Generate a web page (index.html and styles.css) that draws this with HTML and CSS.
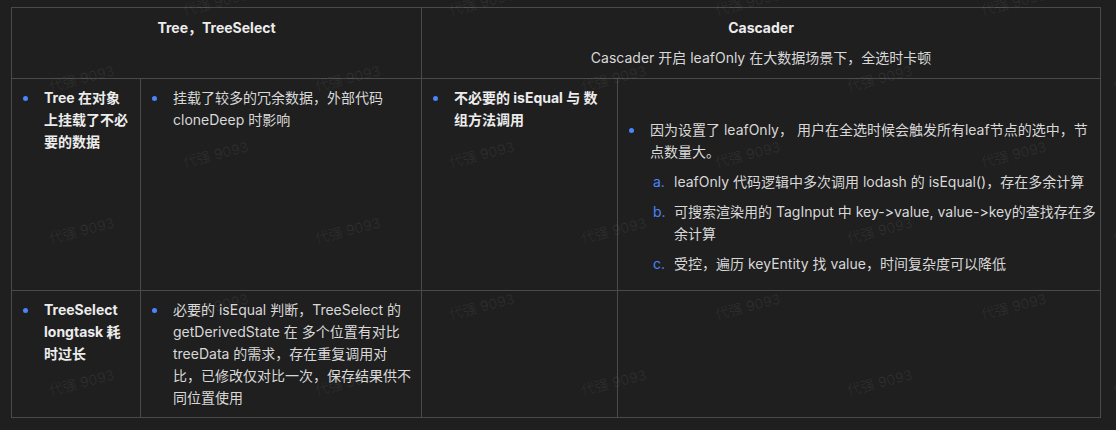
FILE: index.html
```html
<!DOCTYPE html>
<html lang="zh">
<head>
<meta charset="utf-8">
<title>Tree / Cascader 性能</title>
<link rel="stylesheet" href="styles.css">
</head>
<body>
<div class="page">
  <table class="doc-table">
    <colgroup>
      <col class="c1"><col class="c2"><col class="c3"><col class="c4">
    </colgroup>
    <tr class="head-row">
      <td colspan="2" class="head">
        <p class="title">Tree，TreeSelect</p>
      </td>
      <td colspan="2" class="head">
        <p class="title">Cascader</p>
        <p class="sub">Cascader 开启 leafOnly 在大数据场景下，全选时卡顿</p>
      </td>
    </tr>
    <tr>
      <td><ul class="list"><li class="strong">Tree 在对象上挂载了不必要的数据</li></ul></td>
      <td><ul class="list"><li>挂载了较多的冗余数据，外部代码 cloneDeep 时影响</li></ul></td>
      <td><ul class="list"><li class="strong">不必要的 isEqual 与 数组方法调用</li></ul></td>
      <td class="wide">
        <p class="empty"></p>
        <ul class="list spaced">
          <li>因为设置了 leafOnly， 用户在全选时候会触发所有leaf节点的选中，节点数量大。
            <ol class="sublist">
              <li><span class="mk">a.</span>leafOnly 代码逻辑中多次调用 lodash 的 isEqual()，存在多余计算</li>
              <li><span class="mk">b.</span>可搜索渲染用的 TagInput 中 key-&gt;value, value-&gt;key的查找存在多余计算</li>
              <li><span class="mk">c.</span>受控，遍历 keyEntity 找 value，时间复杂度可以降低</li>
            </ol>
          </li>
        </ul>
      </td>
    </tr>
    <tr>
      <td><ul class="list"><li class="strong">TreeSelect longtask 耗时过长</li></ul></td>
      <td><ul class="list"><li>必要的 isEqual 判断，TreeSelect 的 getDerivedState 在 多个位置有对比 treeData 的需求，存在重复调用对比，已修改仅对比一次，保存结果供不同位置使用</li></ul></td>
      <td></td>
      <td class="wide"></td>
    </tr>
  </table>

  <div class="watermarks" aria-hidden="true">
    <div class="wm-row even"><span>代强 9093</span><span>代强 9093</span><span>代强 9093</span><span>代强 9093</span></div>
    <div class="wm-row odd"><span>代强 9093</span><span>代强 9093</span><span>代强 9093</span><span>代强 9093</span><span>代强 9093</span></div>
    <div class="wm-row even"><span>代强 9093</span><span>代强 9093</span><span>代强 9093</span><span>代强 9093</span></div>
    <div class="wm-row odd"><span>代强 9093</span><span>代强 9093</span><span>代强 9093</span><span>代强 9093</span><span>代强 9093</span></div>
    <div class="wm-row even"><span>代强 9093</span><span>代强 9093</span><span>代强 9093</span><span>代强 9093</span></div>
    <div class="wm-row odd"><span>代强 9093</span><span>代强 9093</span><span>代强 9093</span><span>代强 9093</span><span>代强 9093</span></div>
  </div>
</div>
</body>
</html>
```

FILE: styles.css
```css
html, body {
  margin: 0;
  padding: 0;
  background: #1f1f1f;
  height: 100%;
  overflow: hidden;
}

body {
  font-family: "Inter", "Noto Sans CJK SC", sans-serif;
  font-size: 14px;
  color: #d8d8d8;
  font-feature-settings: "calt" 0, "liga" 0;
  font-variant-ligatures: none;
}

.page {
  position: relative;
  padding: 7px 0 0 11px;
  height: 430px;
  box-sizing: border-box;
  overflow: hidden;
}

.doc-table {
  border-collapse: collapse;
  table-layout: fixed;
  width: 1089px;
}

.c1 { width: 129px; }
.c2 { width: 281px; }
.c3 { width: 196px; }
.c4 { width: 483px; }

.doc-table td {
  border: 1px solid #4a4a4a;
  padding: 8px;
  vertical-align: top;
  line-height: 22px;
}

.doc-table td.wide {
  padding-right: 3px;
}

.doc-table td.head {
  text-align: center;
  padding: 9px 8px;
}

.head p {
  margin: 0;
}

.head .title {
  font-weight: 700;
  color: #ececec;
}

.head .sub {
  margin-top: 8px;
  color: #d8d8d8;
}

.empty {
  margin: 0;
  height: 22px;
}

.list {
  list-style: none;
  margin: 0;
  padding: 0;
}

.list.spaced {
  margin: 10px 0 7px;
}

.list > li {
  position: relative;
  padding-left: 24px;
}

.list > li::before {
  content: "";
  position: absolute;
  left: 3px;
  top: 9px;
  width: 5px;
  height: 5px;
  border-radius: 50%;
  background: #4c84fb;
}

.list > li.strong {
  font-weight: 700;
  color: #ececec;
}

.sublist {
  list-style: none;
  margin: 0;
  padding: 0 0 0 24px;
}

.sublist li {
  position: relative;
  margin-top: 8px;
}

.sublist .mk {
  position: absolute;
  left: -21px;
  color: #4c84fb;
}

.watermarks {
  position: absolute;
  left: 0;
  top: -36px;
  width: 1116px;
  pointer-events: none;
  display: flex;
  flex-direction: column;
}

.wm-row {
  height: 76px;
  display: flex;
  align-items: center;
  white-space: nowrap;
}

.wm-row.even { padding-left: 182px; }
.wm-row.odd { padding-left: 48px; }

.wm-row span {
  flex: 0 0 266px;
  display: inline-block;
  font-size: 14px;
  color: rgba(255, 255, 255, 0.065);
  transform: rotate(-14deg);
  transform-origin: 32px 50%;
}
```
